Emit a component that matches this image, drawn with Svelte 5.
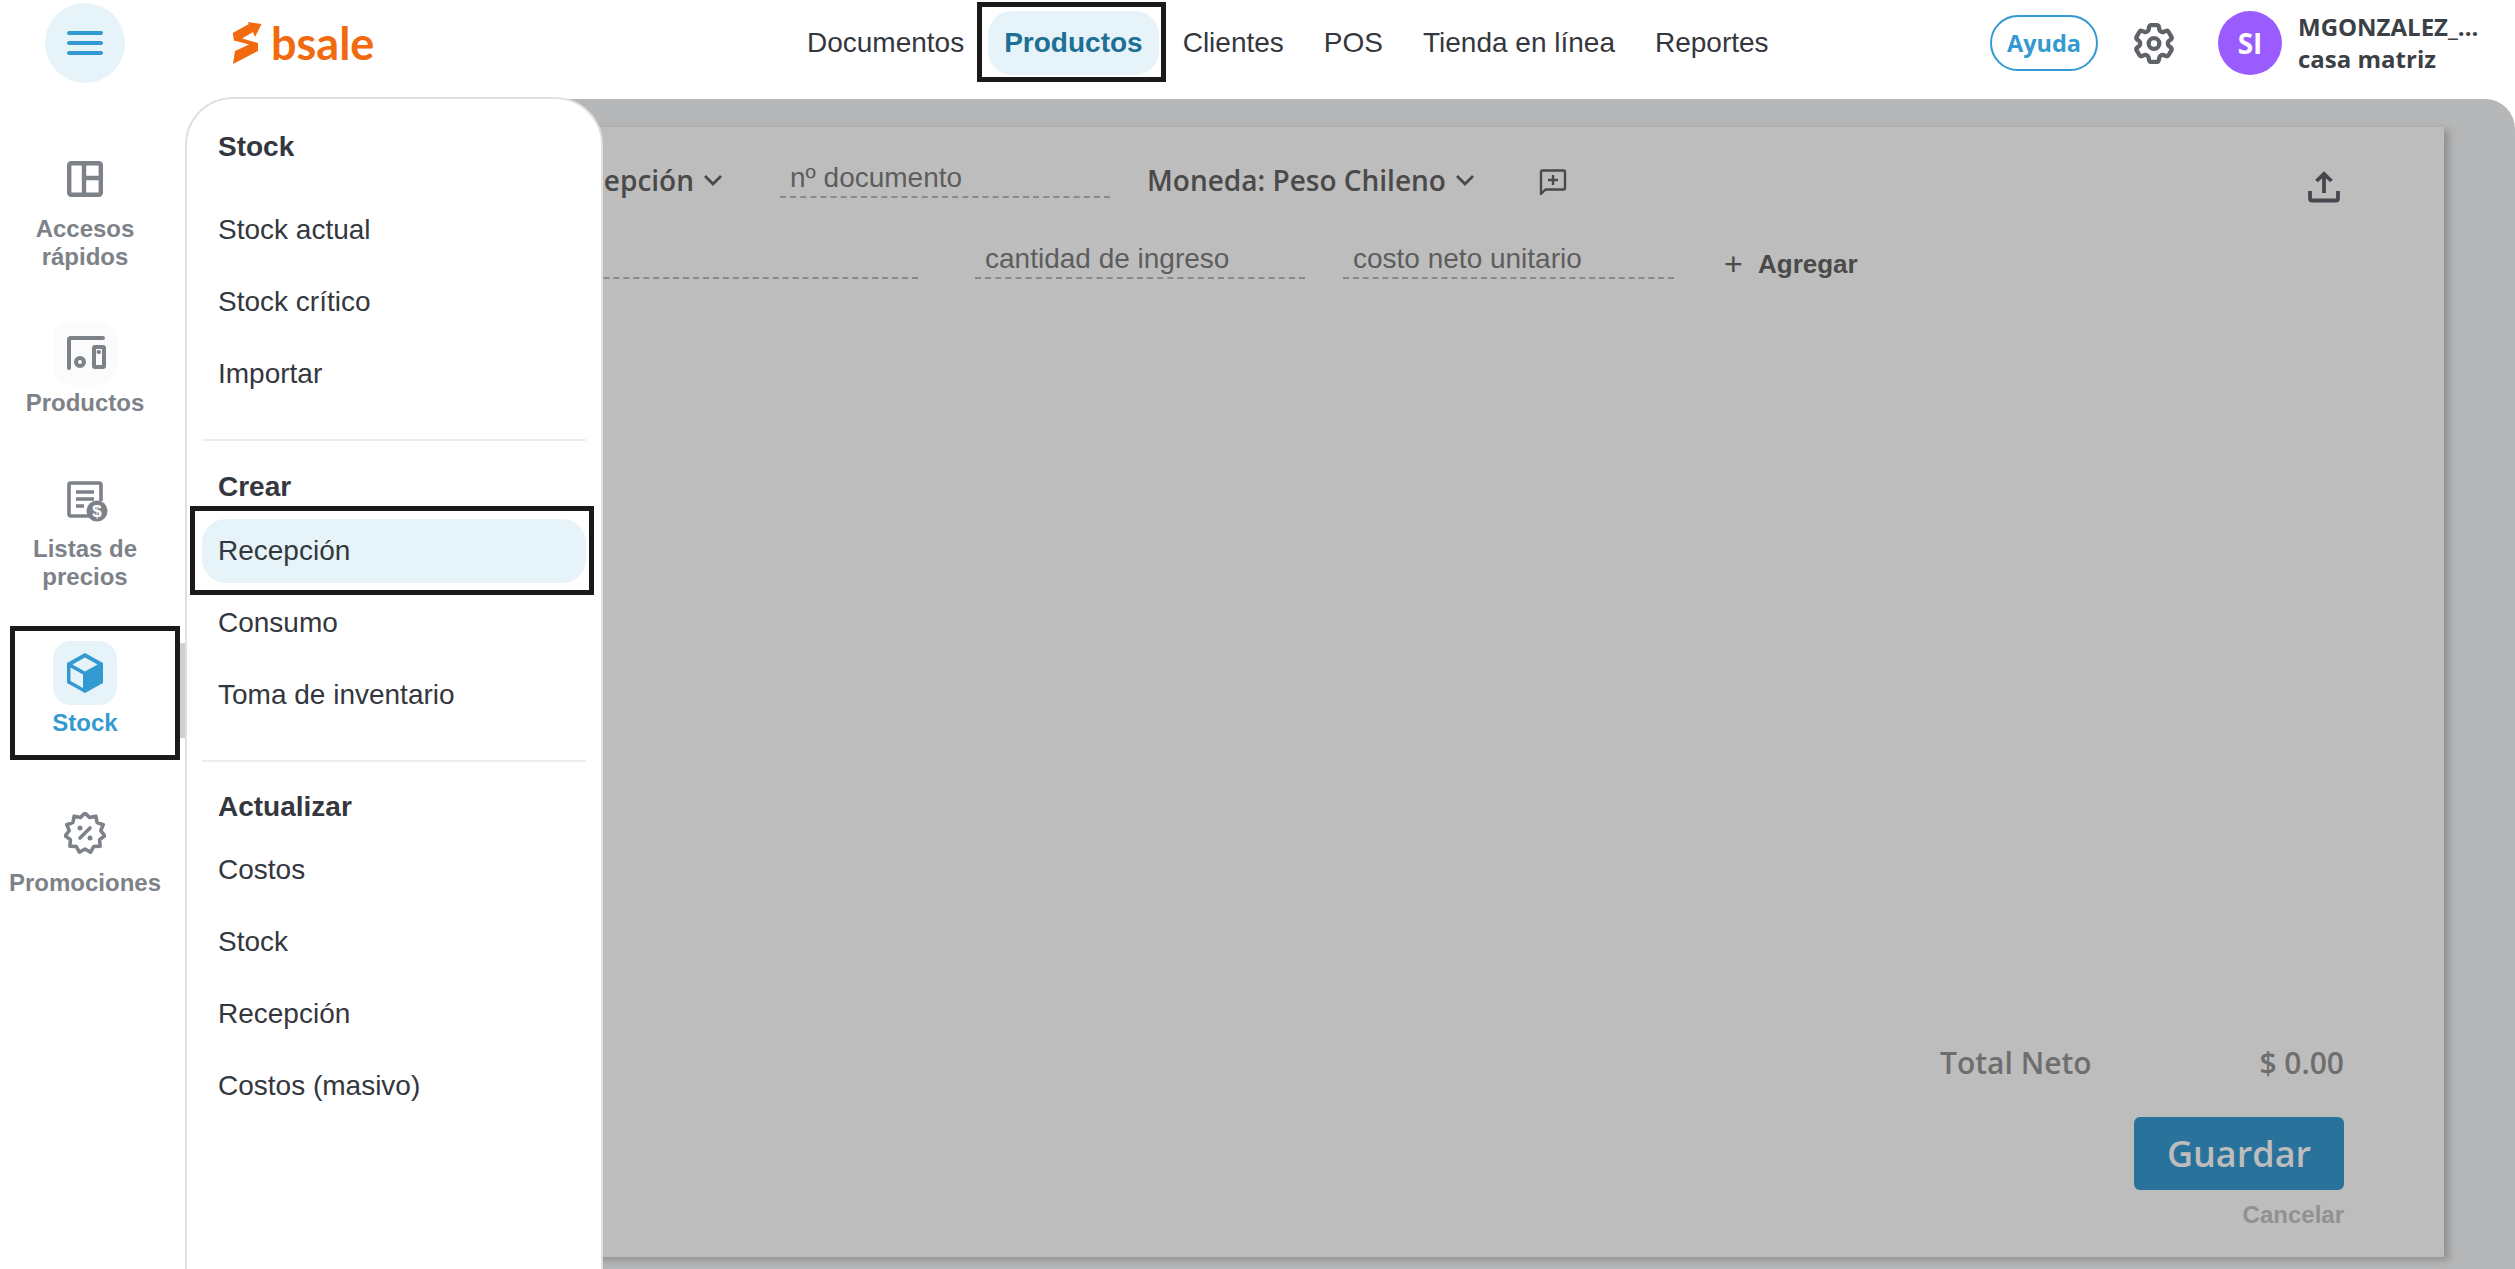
<script>
  const navItems = ['Documentos', 'Productos', 'Clientes', 'POS', 'Tienda en línea', 'Reportes'];
  const menu = [
    { title: 'Stock', cls: 'first', items: ['Stock actual', 'Stock crítico', 'Importar'] },
    { title: 'Crear', cls: '', items: ['Recepción', 'Consumo', 'Toma de inventario'] },
    { title: 'Actualizar', cls: 'last', items: ['Costos', 'Stock', 'Recepción', 'Costos (masivo)'] }
  ];
  const star = (() => {
    const n = 11, pts = [];
    for (let i = 0; i < n * 2; i++) {
      const r = i % 2 ? 16 : 20;
      const a = (Math.PI * i) / n - Math.PI / 2;
      pts.push((21 + r * Math.cos(a)).toFixed(1) + ',' + (21 + r * Math.sin(a)).toFixed(1));
    }
    return pts.join(' ');
  })();
</script>

<div class="page">
  <header class="header">
    <button class="burger" aria-label="menu"><span></span><span></span><span></span></button>
    <div class="logo">
      <svg class="logo-mark" width="30" height="42" viewBox="0 0 30 42">
        <path d="M0.7 11 L17 2 L15.5 0 L29.500 2 L23 15 L21 10 L10 16.500 L26 21 L26 29 L1 42 L3 29 L17 22.500 L2 18.500 Z" fill="#f26a0f" />
      </svg>
      <span class="logo-text">bsale</span>
    </div>
    <nav class="nav">
      {#each navItems as item}
        <a class="nav-item" class:active={item === 'Productos'} href="#top">{item}</a>
      {/each}
    </nav>
    <div class="right">
      <button class="help">Ayuda</button>
      <svg class="gear" viewBox="2.4 2 19.2 20" width="40" height="41" fill="none" stroke="#5f6368" stroke-width="2.1" stroke-linejoin="round">
        <path d="M9.594 3.94c.09-.542.56-.94 1.11-.94h2.593c.55 0 1.02.398 1.11.94l.213 1.281c.063.374.313.686.645.87.074.04.147.083.22.127.324.196.72.257 1.075.124l1.217-.456a1.125 1.125 0 011.37.49l1.296 2.247a1.125 1.125 0 01-.26 1.431l-1.003.827c-.293.24-.438.613-.431.992a6.759 6.759 0 010 .255c-.007.378.138.75.43.99l1.005.828c.424.35.534.954.26 1.43l-1.298 2.247a1.125 1.125 0 01-1.369.491l-1.217-.456c-.355-.133-.75-.072-1.076.124a6.57 6.57 0 01-.22.128c-.331.183-.581.495-.644.869l-.213 1.28c-.09.543-.56.941-1.11.941h-2.594c-.55 0-1.02-.398-1.11-.94l-.213-1.281c-.062-.374-.312-.686-.644-.87a6.52 6.52 0 01-.22-.127c-.325-.196-.72-.257-1.076-.124l-1.217.456a1.125 1.125 0 01-1.369-.49l-1.297-2.247a1.125 1.125 0 01.26-1.431l1.004-.827c.292-.24.437-.613.43-.992a6.932 6.932 0 010-.255c.007-.378-.138-.75-.43-.99l-1.004-.828a1.125 1.125 0 01-.26-1.43l1.297-2.247a1.125 1.125 0 011.37-.491l1.216.456c.356.133.751.072 1.076-.124.072-.044.146-.087.22-.128.332-.183.582-.495.644-.869l.214-1.281z" />
        <circle cx="12" cy="12" r="2.6" />
      </svg>
      <div class="avatar">SI</div>
      <div class="user">
        <div>MGONZALEZ_...</div>
        <div>casa matriz</div>
      </div>
    </div>
  </header>

  <div class="body">
    <aside class="sidebar">
      <div class="side-item">
        <div class="tile">
          <svg width="36" height="36" viewBox="0 0 36 36" fill="none" stroke="#7d8288" stroke-width="4.4">
            <rect x="2.2" y="2.2" width="31.6" height="31.6" rx="2" />
            <path d="M17 2v32M17 17h17" />
          </svg>
        </div>
        <span>Accesos<br />rápidos</span>
      </div>
      <div class="side-item">
        <div class="tile soft">
          <svg width="64" height="64" viewBox="0 0 64 64" fill="none" stroke="#7d8288" stroke-width="4" stroke-linecap="round" stroke-linejoin="round">
            <path d="M16 47 V19 Q16 17 18 17 H50" />
            <circle cx="27" cy="41" r="4" />
            <rect x="41" y="26" width="10" height="20" rx="1" />
            <path d="M45.500 31h.6" />
          </svg>
        </div>
        <span>Productos</span>
      </div>
      <div class="side-item">
        <div class="tile">
          <svg class="list-icon" width="42" height="42" viewBox="0 0 42 42" fill="none" stroke="#7d8288" stroke-width="3.6">
            <path d="M22 35 H4 Q2 35 2 33 V3.500 Q2 2 4 2 H32 Q34 2 34 4 V20" />
            <path d="M9 11h18M9 18h18M9 25h8" />
            <circle cx="30" cy="30" r="10.500" fill="#7d8288" stroke="none" />
            <text x="30" y="36" class="dollar">$</text>
          </svg>
        </div>
        <span>Listas de<br />precios</span>
      </div>
      <div class="side-item current">
        <div class="tile on">
          <svg width="36" height="40" viewBox="0 0 36 40">
            <path d="M18 0 L36 10 V30 L18 40 L0 30 V10 Z" fill="#339ad1" />
            <path d="M18 4.500 L30.500 11.500 L18 18.500 L5.500 11.500 Z M3.500 14.500 L16 21.500 V35 L3.500 28 Z" fill="#e6f3f9" />
          </svg>
        </div>
        <span>Stock</span>
        <i class="scroll"></i>
      </div>
      <div class="side-item">
        <div class="tile">
          <svg width="42" height="42" viewBox="0 0 42 42" fill="none" stroke="#7d8288" stroke-width="3.6" stroke-linejoin="round">
            <polygon points={star} />
            <path d="M26 16 L16 26" stroke-linecap="round" />
            <circle cx="16" cy="16" r="2.500" fill="#7d8288" stroke="none" />
            <circle cx="26" cy="26" r="2.500" fill="#7d8288" stroke="none" />
          </svg>
        </div>
        <span>Promociones</span>
      </div>
    </aside>

    <main class="main">
      <section class="card">
        <div class="row one">
          <div class="doc-type"><span>Tipo de documento: Recepción</span><svg class="chev" width="20" height="12" viewBox="0 0 20 12" fill="none" stroke="#4a4a4a" stroke-width="2.8"><path d="M2 2l8 8 8-8" /></svg></div>
          <div class="field num">nº documento</div>
          <div class="currency"><span>Moneda: Peso Chileno</span><svg class="chev" width="20" height="12" viewBox="0 0 20 12" fill="none" stroke="#4a4a4a" stroke-width="2.8"><path d="M2 2l8 8 8-8" /></svg></div>
          <svg class="note" width="28" height="26" viewBox="0 0 28 26" fill="none" stroke="#4a4a4a" stroke-width="2.4" stroke-linejoin="round">
            <path d="M2 25 V3 Q2 1.500 3.500 1.500 H24.500 Q26 1.500 26 3 V19 Q26 20.500 24.500 20.500 H6.500 Z" />
            <path d="M14 6v10M9 11h10" />
          </svg>
          <svg class="upload" width="32" height="32" viewBox="0 0 32 32" fill="none" stroke="#44474d" stroke-width="3.8">
            <path d="M16 22 V3 M8.500 10 L16 2.800 L23.500 10" />
            <path d="M2 20 V27.500 Q2 29.500 4 29.500 H28 Q30 29.500 30 27.500 V20" />
          </svg>
        </div>
        <div class="row two">
          <div class="field product">producto</div>
          <div class="field qty">cantidad de ingreso</div>
          <div class="field cost">costo neto unitario</div>
          <div class="add"><span class="plus">+</span> Agregar</div>
        </div>
        <div class="bottom">
          <div class="total"><span>Total Neto</span><span>$ 0.00</span></div>
          <button class="save">Guardar</button>
          <div class="cancel">Cancelar</div>
        </div>
      </section>
    </main>
  </div>

  <div class="panel">
    {#each menu as group, g}
      {#if g > 0}<hr class="divider" />{/if}
      <h3 class="title {group.cls}">{group.title}</h3>
      {#each group.items as item, i}
        <div class="entry" class:selected={g === 1 && i === 0}>{item}</div>
      {/each}
    {/each}
  </div>

  <i class="mark mark-nav"></i>
  <i class="mark mark-side"></i>
  <i class="mark mark-entry"></i>
</div>

<style>
  :global(body) {
    margin: 0;
    overflow: hidden;
    background: #fff;
    font-family: "Liberation Sans", Arial, sans-serif;
  }
  .page {
    position: relative;
    width: 2515px;
    height: 1269px;
    overflow: hidden;
    display: flex;
    flex-direction: column;
    background: #fff;
  }
  .header {
    height: 99px;
    flex: none;
    display: flex;
    align-items: center;
  }
  .burger {
    width: 80px;
    height: 80px;
    margin: -13px 0 0 45px;
    padding: 0;
    border: 0;
    border-radius: 50%;
    background: #e6f3f9;
    display: flex;
    flex-direction: column;
    align-items: center;
    justify-content: center;
    gap: 6px;
  }
  .burger span {
    width: 36px;
    height: 4px;
    border-radius: 2px;
    background: #339ad1;
  }
  .logo {
    margin: -13px 0 0 107px;
    width: 140px;
    flex: none;
    display: flex;
    align-items: center;
    gap: 9px;
  }
  .logo-mark {
    flex: none;
  }
  .logo-text {
    font-family: "Lato", sans-serif;
    font-weight: 700;
    font-size: 45px;
    line-height: 42px;
    color: #f26a0f;
  }
  .nav {
    display: flex;
    gap: 8px;
    margin: -13px 0 0 419px;
  }
  .nav-item {
    height: 64px;
    padding: 0 16px;
    display: flex;
    align-items: center;
    font-size: 28px;
    color: #34373d;
    text-decoration: none;
    border-radius: 24px;
  }
  .nav-item.active {
    background: #e6f3f9;
    color: #1d6f96;
    font-weight: 700;
  }
  .right {
    margin: -13px 0 0 auto;
    display: flex;
    align-items: center;
    width: 525px;
    box-sizing: border-box;
    font-family: "Open Sans", sans-serif;
  }
  .help {
    width: 108px;
    height: 56px;
    box-sizing: border-box;
    border: 2px solid #339ad1;
    border-radius: 28px;
    background: #fff;
    color: #339ad1;
    font: 700 23.5px "Open Sans", sans-serif;
    padding: 0;
  }
  .gear {
    margin-left: 36px;
  }
  .avatar {
    width: 64px;
    height: 64px;
    margin-left: 44px;
    border-radius: 50%;
    background: #9b5cff;
    color: #fff;
    font-weight: 700;
    font-size: 28px;
    display: flex;
    align-items: center;
    justify-content: center;
  }
  .user {
    margin-left: 16px;
    font-size: 24px;
    font-weight: 700;
    line-height: 32px;
    color: #3c3f46;
    white-space: nowrap;
  }
  .body {
    flex: 1;
    display: flex;
    min-height: 0;
  }
  .sidebar {
    width: 185px;
    flex: none;
    box-sizing: border-box;
    padding: 48px 15px 0 0;
    display: flex;
    flex-direction: column;
    align-items: center;
    gap: 50px;
    position: relative;
    margin-right: 100px;
  }
  .side-item {
    display: flex;
    flex-direction: column;
    align-items: center;
    gap: 4px;
    text-align: center;
    font-size: 24px;
    font-weight: 700;
    line-height: 28px;
    color: #7d8288;
    white-space: nowrap;
  }
  .tile {
    width: 64px;
    height: 64px;
    border-radius: 18px;
    display: flex;
    align-items: center;
    justify-content: center;
  }
  .tile.soft {
    background: #fbfbfb;
  }
  .tile.on {
    background: #e6f3f9;
  }
  .list-icon {
    margin: 0 -6px -6px 0;
  }
  .current {
    color: #339ad1;
    margin-bottom: 14px;
  }
  .scroll {
    position: absolute;
    left: 180px;
    top: 544px;
    width: 5px;
    height: 95px;
    background: #cfcfcf;
  }
  .dollar {
    font: 700 17px "Liberation Sans", sans-serif;
    fill: #fff;
    stroke: none;
    text-anchor: middle;
  }
  .main {
    flex: 1;
    min-width: 0;
    background: #b6b7b8;
    border-top-right-radius: 30px;
    padding: 28px 71px 12px 0;
    display: flex;
  }
  .card {
    flex: 1;
    box-sizing: border-box;
    background: #bdbdbd;
    box-shadow: 5px 3px 8px rgba(0, 0, 0, 0.22);
    padding: 33px 100px 28px 0;
    display: flex;
    flex-direction: column;
    color: #4a4a4a;
  }
  .row {
    display: flex;
    align-items: flex-start;
  }
  .doc-type,
  .currency {
    display: flex;
    align-items: center;
    gap: 9px;
    font: 600 28px/40px "Open Sans", sans-serif;
    white-space: nowrap;
    flex: none;
  }
  .doc-type {
    width: 438px;
    justify-content: flex-end;
  }
  .chev {
    flex: none;
  }
  .field {
    box-sizing: border-box;
    height: 38px;
    padding-left: 10px;
    border-bottom: 2px dashed #8a8a8a;
    font-size: 28px;
    line-height: 36px;
    color: #5d5d5d;
    flex: none;
    white-space: nowrap;
  }
  .num {
    width: 330px;
    margin-left: 57px;
  }
  .currency {
    margin-left: 37px;
  }
  .note {
    margin: 9px 0 0 64px;
  }
  .upload {
    margin: 11px 4px 0 auto;
  }
  .two {
    margin-top: 38px;
  }
  .product {
    width: 633px;
  }
  .qty {
    width: 330px;
    margin-left: 57px;
  }
  .cost {
    width: 331px;
    margin-left: 38px;
  }
  .add {
    margin: 5px 0 0 50px;
    font-weight: 700;
    font-size: 26px;
    line-height: 36px;
    display: flex;
    align-items: center;
  }
  .plus {
    font-weight: 400;
    font-size: 32px;
    width: 34px;
  }
  .bottom {
    margin-top: auto;
    display: flex;
    flex-direction: column;
    align-items: flex-end;
  }
  .total {
    width: 404px;
    display: flex;
    justify-content: space-between;
    font: 600 30px/40px "Open Sans", sans-serif;
    color: #6e6e6e;
    margin-bottom: 34px;
  }
  .save {
    width: 210px;
    height: 73px;
    border: 0;
    padding: 0;
    border-radius: 6px;
    background: #29729c;
    color: #bdbdbd;
    font: 600 36px "Open Sans", sans-serif;
  }
  .cancel {
    margin-top: 11px;
    font-size: 24px;
    font-weight: 700;
    line-height: 28px;
    color: #919191;
  }
  .panel {
    position: absolute;
    left: 185px;
    top: 97px;
    width: 418px;
    height: 1230px;
    box-sizing: border-box;
    background: #fff;
    border: 2px solid #e0e0e0;
    border-radius: 48px;
    padding: 0 15px;
    color: #34373d;
  }
  .title {
    margin: 0 0 14px;
    padding-left: 16px;
    font-size: 28px;
    font-weight: 700;
    line-height: 36px;
    height: 36px;
  }
  .title.first {
    margin: 30px 0 33px;
  }
  .title.last {
    margin: -1px 0 13px;
  }
  .entry {
    height: 64px;
    margin-bottom: 8px;
    padding-left: 16px;
    display: flex;
    align-items: center;
    font-size: 28px;
    border-radius: 24px;
  }
  .entry.selected {
    background: #e6f3f9;
  }
  .divider {
    margin: 33px 0 28px;
    border: 0;
    height: 2px;
    background: #ececec;
  }
  .mark {
    position: absolute;
    box-sizing: border-box;
    border: 5px solid #1a1a1a;
    pointer-events: none;
  }
  .mark-nav {
    left: 977px;
    top: 2px;
    width: 189px;
    height: 80px;
  }
  .mark-side {
    left: 10px;
    top: 626px;
    width: 170px;
    height: 134px;
  }
  .mark-entry {
    left: 190px;
    top: 506px;
    width: 404px;
    height: 89px;
  }
</style>
